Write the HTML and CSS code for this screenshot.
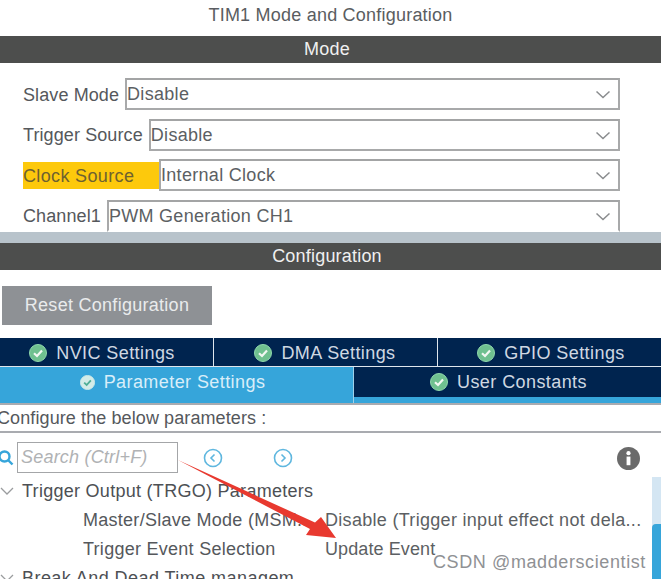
FILE: index.html
```html
<!DOCTYPE html>
<html lang="en">
<head>
<meta charset="utf-8">
<title>TIM1 Mode and Configuration</title>
<link rel="stylesheet" href="styles.css">
</head>
<body>
<div class="page">
  <div class="title">TIM1 Mode and Configuration</div>
  <div class="bar">Mode</div>
  <section class="mode">
    <div class="field"><span class="label">Slave Mode</span><div class="select"><span>Disable</span><svg class="chev" viewBox="0 0 16 9"><path d="M1.5 1.5 8 7.5l6.5-6"/></svg></div></div>
    <div class="field"><span class="label">Trigger Source</span><div class="select"><span>Disable</span><svg class="chev" viewBox="0 0 16 9"><path d="M1.5 1.5 8 7.5l6.5-6"/></svg></div></div>
    <div class="field"><span class="label highlight">Clock Source</span><div class="select"><span>Internal Clock</span><svg class="chev" viewBox="0 0 16 9"><path d="M1.5 1.5 8 7.5l6.5-6"/></svg></div></div>
    <div class="field cut"><span class="label">Channel1</span><div class="select"><span>PWM Generation CH1</span><svg class="chev" viewBox="0 0 16 9"><path d="M1.5 1.5 8 7.5l6.5-6"/></svg></div></div>
  </section>
  <div class="band"></div>
  <div class="bar">Configuration</div>
  <div class="reset-wrap"><div class="reset">Reset Configuration</div></div>
  <div class="tabs-top">
    <div class="tab t1"><svg class="ok" viewBox="0 0 18 18"><circle cx="9" cy="9" r="8.5"/><path d="M5 9.2 8 12l5-5.5"/></svg>NVIC Settings</div>
    <div class="tab t2"><svg class="ok" viewBox="0 0 18 18"><circle cx="9" cy="9" r="8.5"/><path d="M5 9.2 8 12l5-5.5"/></svg>DMA Settings</div>
    <div class="tab t3"><svg class="ok" viewBox="0 0 18 18"><circle cx="9" cy="9" r="8.5"/><path d="M5 9.2 8 12l5-5.5"/></svg>GPIO Settings</div>
  </div>
  <div class="tabs-bottom">
    <div class="tab active"><svg class="ok" viewBox="0 0 18 18"><circle cx="9" cy="9" r="8.5"/><path d="M5 9.2 8 12l5-5.5"/></svg>Parameter Settings</div>
    <div class="tab user"><svg class="ok" viewBox="0 0 18 18"><circle cx="9" cy="9" r="8.5"/><path d="M5 9.2 8 12l5-5.5"/></svg>User Constants</div>
  </div>
  <div class="configure"><span>Configure the below parameters :</span></div>
  <div class="searchrow">
    <svg class="glass" viewBox="0 0 16 16"><circle cx="6.5" cy="6.5" r="5"/><path d="m10.5 10.500 4 4"/></svg>
    <div class="search">Search (Ctrl+F)</div>
    <svg class="nav nav-a" viewBox="0 0 20 20"><circle cx="10" cy="10" r="8.5"/><path d="M11.5 6.5 8 10l3.5 3.5"/></svg>
    <svg class="nav nav-b" viewBox="0 0 20 20"><circle cx="10" cy="10" r="8.5"/><path d="M8.5 6.5 12 10l-3.500 3.500"/></svg>
    <svg class="info" viewBox="0 0 24 24"><circle cx="12" cy="12" r="12"/><rect class="info-mark" x="10" y="10" width="4" height="9"/><circle class="info-mark" cx="12" cy="6.500" r="2.200"/></svg>
  </div>
  <div class="tree-area">
    <div class="tree">
      <div class="row group"><svg class="twist" viewBox="0 0 14 8"><path d="M1 1l6 6 6-6"/></svg>Trigger Output (TRGO) Parameters</div>
      <div class="row item"><span class="key">Master/Slave Mode (MSM...</span><span class="val">Disable (Trigger input effect not dela...</span></div>
      <div class="row item"><span class="key">Trigger Event Selection</span><span class="val">Update Event</span></div>
      <div class="row group wide"><svg class="twist" viewBox="0 0 14 8"><path d="M1 1l6 6 6-6"/></svg>Break And Dead Time managem</div>
    </div>
    <div class="scroll"><div class="thumb"></div></div>
  </div>
  <svg class="arrow" viewBox="0 0 661 579"><path class="head" d="M178 460 315 522.500 321 517 336 538 306 535 310 529Z"/></svg>
  <div class="mark">CSDN @madderscientist</div>
</div>
</body>
</html>
```

FILE: styles.css
```css
html, body {
  margin: 0;
  padding: 0;
  background: #fff;
}
.page {
  position: relative;
  width: 661px;
  height: 579px;
  overflow: hidden;
  font-family: "Liberation Sans", Arial, sans-serif;
  font-size: 18px;
  color: #55585c;
}
.title {
  height: 36px;
  line-height: 30px;
  text-align: center;
  font-size: 18px;
  color: #5a5d61;
  letter-spacing: 0.220px;
}
.bar {
  height: 27px;
  line-height: 27px;
  background: #4d4e4d;
  color: #f0f0f0;
  text-align: center;
  font-size: 18px;
  padding-right: 7px;
  letter-spacing: 0.200px;
}
.mode {
  height: 169px;
  padding: 15px 41px 0 23px;
  box-sizing: border-box;
  overflow: hidden;
  display: flex;
  flex-direction: column;
  gap: 8.500px;
}
.field {
  display: flex;
  align-items: center;
  flex: none;
  height: 32px;
}
.label {
  white-space: nowrap;
  margin-right: 6px;
  height: 27px;
  line-height: 28px;
  letter-spacing: 0.100px;
}
.highlight {
  background: #fdc90c;
  width: 136px;
  margin-right: 0;
  color: #6d6130;
  letter-spacing: 0.350px;
}
.select {
  flex: 1;
  height: 32px;
  box-sizing: border-box;
  border: 2px solid #a8a9aa;
  border-top-color: #a3a4a5;
  display: flex;
  align-items: center;
  justify-content: space-between;
  padding: 1px 7px 0 0;
  color: #5c5f63;
  letter-spacing: 0.300px;
}
.cut .select { border-bottom-color: transparent; }
.chev {
  width: 16px;
  height: 9px;
  fill: none;
  stroke: #8a8c8e;
  stroke-width: 1.500;
}
.band {
  height: 11px;
  background: #b8c3cb;
}
.reset-wrap {
  height: 68px;
  padding: 16px 0 0 2px;
  box-sizing: border-box;
}
.reset {
  width: 210px;
  height: 39px;
  line-height: 39px;
  background: #8e9195;
  color: #e9ebec;
  text-align: center;
  letter-spacing: 0.280px;
}
.tabs-top {
  display: flex;
  height: 28px;
  background: #00244f;
}
.tab {
  display: flex;
  align-items: center;
  justify-content: center;
  gap: 9px;
  box-sizing: border-box;
  color: #cfd8e2;
  letter-spacing: 0.420px;
}
.tabs-top .tab { padding-top: 2px; }
.t1 { width: 214px; border-right: 1px solid #dfe6ec; padding-right: 9px; }
.t2 { width: 224px; border-right: 1px solid #dfe6ec; padding-right: 1px; }
.t3 { flex: 1; padding-left: 3px; }
.ok {
  width: 18px;
  height: 18px;
  flex: none;
}
.ok circle { fill: #6fc08f; stroke: #8fd8ac; stroke-width: 1; }
.ok path { fill: none; stroke: #f2f7f2; stroke-width: 2.200; }
.tabs-bottom {
  display: flex;
  height: 37px;
  background: #36a5da;
  border-top: 1px solid #dfe6ec;
  box-sizing: border-box;
  align-items: flex-start;
}
.active {
  width: 354px;
  height: 36px;
  padding-bottom: 5px;
  padding-right: 8px;
  color: #d9eef9;
  border-right: 1px solid #9fd1ea;
}
.active .ok { width: 15px; height: 15px; }
.active .ok circle { fill: #d3ece8; stroke: #d3ece8; }
.active .ok path { stroke: #4eae96; }
.user {
  flex: 1;
  height: 30px;
  background: #00244f;
  padding-left: 2px;
}
.configure {
  height: 30px;
  box-sizing: border-box;
  border-top: 2px solid #a9abb0;
  border-bottom: 2px solid #a9abb0;
  line-height: 27px;
  white-space: nowrap;
  overflow: hidden;
  letter-spacing: 0.100px;
}
.configure span { margin-left: -3px; }
.searchrow {
  display: flex;
  align-items: center;
  height: 44px;
  box-sizing: border-box;
  padding-top: 5px;
}
.glass {
  width: 16px;
  height: 16px;
  margin-left: -2px;
  margin-right: 3px;
  fill: none;
  stroke: #36a5da;
  stroke-width: 2.400;
}
.search {
  width: 161px;
  height: 31px;
  box-sizing: border-box;
  border: 1px solid #a4a6a8;
  line-height: 29px;
  padding-left: 3px;
  color: #b0b2b4;
  font-style: italic;
  letter-spacing: 0.200px;
}
.nav {
  width: 20px;
  height: 20px;
  fill: none;
  stroke: #5fb7df;
  stroke-width: 1.600;
}
.nav-a { margin-left: 25px; }
.nav-b { margin-left: 50px; }
.info {
  width: 23px;
  height: 23px;
  margin-left: auto;
  margin-right: 21px;
  margin-top: 1px;
  fill: #6a6a6a;
}
.info-mark { fill: #fff; }
.tree-area {
  display: flex;
  height: 102px;
}
.tree { flex: 1; min-width: 0; }
.row {
  height: 29px;
  line-height: 29px;
  white-space: nowrap;
  display: flex;
  align-items: center;
  position: relative;
}
.group {
  padding-left: 22px;
  color: #4d5054;
  letter-spacing: 0.280px;
}
.wide { letter-spacing: 0.450px; }
.twist {
  position: absolute;
  left: 0;
  top: 10px;
  width: 14px;
  height: 8px;
  fill: none;
  stroke: #9a9c9e;
  stroke-width: 1.300;
}
.item { padding-left: 83px; letter-spacing: 0.270px; }
.key {
  width: 242px;
  flex: none;
  overflow: hidden;
}
.val { color: #5c5f63; letter-spacing: 0.100px; }
.item:nth-child(2) .val { letter-spacing: 0.300px; }
.scroll {
  width: 9px;
  flex: none;
  background: #d4e6f3;
  display: flex;
  flex-direction: column;
  justify-content: flex-end;
}
.thumb {
  height: 55px;
  background: #36a5da;
  border-radius: 4px 0 0 0;
}
.arrow {
  position: absolute;
  left: 0;
  top: 0;
  width: 661px;
  height: 579px;
  pointer-events: none;
}
.head { fill: #e8392f; }
.mark {
  position: absolute;
  left: 433px;
  top: 551px;
  font-size: 18px;
  line-height: 22px;
  color: #8f9194;
  letter-spacing: 0.600px;
  white-space: nowrap;
}
```
